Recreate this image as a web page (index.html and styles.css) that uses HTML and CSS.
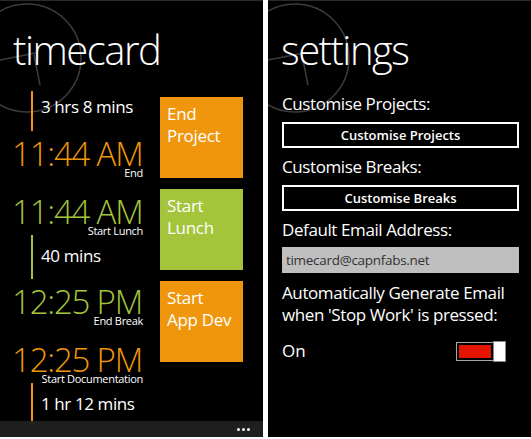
FILE: index.html
```html
<!DOCTYPE html>
<html lang="en">
<head>
    <meta charset="UTF-8">
    <title>timecard</title>
    <link rel="stylesheet" href="styles.css">
</head>
<body>
    <div class="screens">
        <section class="phone">
            <svg class="watermark" width="90" height="120" viewBox="0 0 90 120">
                <circle cx="27" cy="57" r="54" fill="none" stroke="#3c3c3c" stroke-width="1.5"/>
                <line x1="36" y1="52" x2="0" y2="59" stroke="#3c3c3c" stroke-width="1.5"/>
                <line x1="34" y1="54" x2="40" y2="84" stroke="#3c3c3c" stroke-width="1.5"/>
            </svg>
            <h1 class="page-title">timecard</h1>
            <div class="board">
                <div class="timeline">
                    <div class="duration orange">3 hrs 8 mins</div>
                    <div class="event orange">
                        <div class="time">11:44 AM</div>
                        <div class="caption">End</div>
                    </div>
                    <div class="event green">
                        <div class="time">11:44 AM</div>
                        <div class="caption">Start Lunch</div>
                    </div>
                    <div class="duration green">40 mins</div>
                    <div class="event green">
                        <div class="time">12:25 PM</div>
                        <div class="caption">End Break</div>
                    </div>
                    <div class="event orange">
                        <div class="time">12:25 PM</div>
                        <div class="caption">Start Documentation</div>
                    </div>
                    <div class="duration orange">1 hr 12 mins</div>
                </div>
                <div class="tiles">
                    <div class="tile orange-tile">End<br>Project</div>
                    <div class="tile green-tile">Start<br>Lunch</div>
                    <div class="tile orange-tile">Start<br>App Dev</div>
                </div>
            </div>
            <div class="appbar">
                <span class="dot"></span><span class="dot"></span><span class="dot"></span>
            </div>
        </section>

        <section class="phone settings">
            <svg class="watermark" width="90" height="120" viewBox="0 0 90 120">
                <circle cx="27" cy="57" r="54" fill="none" stroke="#3c3c3c" stroke-width="1.5"/>
                <line x1="36" y1="52" x2="0" y2="59" stroke="#3c3c3c" stroke-width="1.5"/>
                <line x1="34" y1="54" x2="40" y2="84" stroke="#3c3c3c" stroke-width="1.5"/>
            </svg>
            <h1 class="page-title">settings</h1>
            <div class="field-label first">Customise Projects:</div>
            <button class="wp-button">Customise Projects</button>
            <div class="field-label">Customise Breaks:</div>
            <button class="wp-button">Customise Breaks</button>
            <div class="field-label">Default Email Address:</div>
            <div class="textbox">timecard@capnfabs.net</div>
            <p class="toggle-label">Automatically Generate Email when 'Stop Work' is pressed:</p>
            <div class="toggle-row">
                <span>On</span>
                <div class="toggle">
                    <div class="track"><div class="fill"></div></div>
                    <div class="thumb"></div>
                </div>
            </div>
        </section>
    </div>
</body>
</html>
```

FILE: styles.css
```css
body {
    margin: 0;
    background: #fff;
    font-family: "Open Sans", "DejaVu Sans", sans-serif;
    color: #fff;
}
.screens {
    display: flex;
    gap: 5px;
    height: 437px;
}
.phone {
    position: relative;
    isolation: isolate;
    width: 263px;
    background: #000;
    border-top: 1px solid #2a2a2a;
    overflow: hidden;
    display: flex;
    flex-direction: column;
}
.watermark {
    position: absolute;
    top: 0;
    left: 0;
    z-index: -1;
}
.page-title {
    margin: 25px 0 0 13px;
    font-size: 40px;
    font-weight: 300;
    line-height: 48px;
    letter-spacing: -1.5px;
}

/* timecard */
.board {
    flex: 1;
    display: flex;
    margin-top: 17px;
    overflow: hidden;
}
.timeline {
    flex: none;
    width: 131px;
    margin-left: 12px;
    white-space: nowrap;
}
.orange { color: #f0960c; border-color: #f0960c; }
.green { color: #a4c43b; border-color: #a4c43b; }
.duration {
    margin-left: 19px;
    padding: 5px 0 0 8px;
    height: 35px;
    border-left-width: 2px;
    border-left-style: solid;
    color: #fff;
    font-size: 17px;
    line-height: 22px;
    letter-spacing: -0.4px;
}
.event {
    margin-top: 20px;
}
.duration + .event {
    margin-top: 9px;
}
.event + .duration {
    margin-top: -1px;
    padding-top: 10px;
    height: 34px;
}
.time {
    font-size: 33px;
    font-weight: 300;
    line-height: 28px;
    letter-spacing: -1.2px;
}
.caption {
    color: #fff;
    font-size: 11px;
    line-height: 10px;
    text-align: right;
    letter-spacing: -0.3px;
}
.tiles {
    margin: 6px 0 0 17px;
    display: flex;
    flex-direction: column;
    gap: 11px;
}
.tile {
    width: 76px;
    height: 75px;
    padding: 6px 0 0 7px;
    font-size: 17px;
    line-height: 22px;
    letter-spacing: -0.3px;
}
.orange-tile { background: #f0960c; }
.green-tile { background: #a4c43b; }
.appbar {
    height: 16px;
    background: #1f1f1f;
    display: flex;
    justify-content: flex-end;
    align-items: center;
    gap: 2px;
    padding-right: 13px;
}
.dot {
    width: 3px;
    height: 3px;
    border-radius: 50%;
    background: #fff;
}

/* settings */
.settings {
    padding: 0 12px 0 14px;
    width: 237px;
}
.settings .page-title {
    margin-left: -1px;
}
.field-label {
    margin-top: 10px;
    font-size: 17px;
    line-height: 22px;
    letter-spacing: -0.4px;
}
.field-label.first {
    margin-top: 19px;
}
.wp-button {
    margin-top: 7px;
    height: 26px;
    border: 2px solid #fff;
    background: #000;
    color: #fff;
    font-family: inherit;
    font-size: 13px;
    font-weight: 600;
}
.wp-button + .field-label {
    margin-top: 8px;
}
.textbox {
    margin-top: 6px;
    height: 26px;
    padding-left: 4px;
    background: #bfbfbf;
    color: #333;
    font-size: 13.5px;
    line-height: 26px;
    letter-spacing: -0.3px;
}
.toggle-label {
    margin: 9px 0 0;
    font-size: 17px;
    line-height: 22px;
    letter-spacing: -0.4px;
}
.toggle-row {
    margin-top: 14px;
    display: flex;
    justify-content: space-between;
    align-items: center;
    padding-right: 13px;
    font-size: 17px;
    line-height: 22px;
}
.toggle {
    display: flex;
    align-items: center;
}
.track {
    width: 32px;
    height: 13px;
    padding: 2px;
    border: 1px solid #a8a8a8;
    background: #000;
}
.fill {
    height: 100%;
    background: #e31400;
}
.thumb {
    width: 11px;
    height: 19px;
    margin-left: -1px;
    background: #fff;
    border: 1px solid #888;
}
```
